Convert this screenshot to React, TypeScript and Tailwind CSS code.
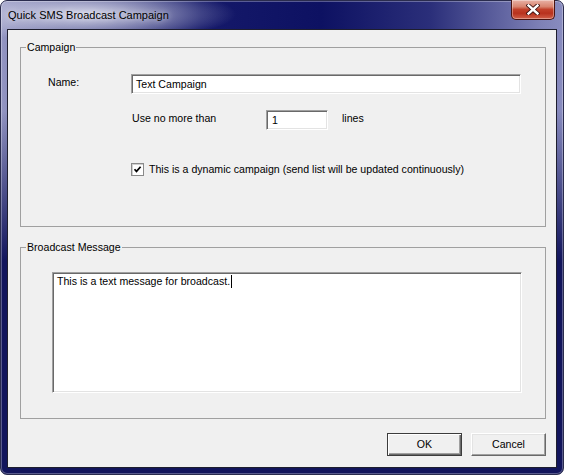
import React from 'react';

const sunken =
  'border border-t-[#a0a0a0] border-l-[#a0a0a0] border-r-white border-b-white bg-white shadow-[inset_1px_1px_0_#696969,inset_-1px_-1px_0_#e3e3e3]';

const CloseButton: React.FC = () => (
  <div className="w-[44px] h-[20px] -mt-[1px] rounded-b-[5px] border border-[#4a1410] border-t-0 flex items-center justify-center bg-[linear-gradient(180deg,#e9b2a6_0%,#d8846f_35%,#c2402a_50%,#b8321e_70%,#d2604a_100%)] shadow-[inset_0_0_0_1px_rgba(255,255,255,0.35)]">
    <svg width="14" height="11" viewBox="0 0 14 11">
      <path d="M2.5 1.5 L11.5 9.5 M11.5 1.5 L2.5 9.5" stroke="#3a1010" strokeWidth="4.2" strokeLinecap="square" />
      <path d="M2.5 1.5 L11.5 9.5 M11.5 1.5 L2.5 9.5" stroke="#ffffff" strokeWidth="2.4" strokeLinecap="square" />
    </svg>
  </div>
);

const Check: React.FC = () => (
  <div className="w-[13px] h-[13px] border border-[#8a8a8a] bg-white shadow-[inset_1px_1px_0_#d0d0d0] flex items-center justify-center">
    <svg width="9" height="9" viewBox="0 0 9 9">
      <path d="M1.5 4.2 L3.5 6.4 L7.6 1.8" stroke="#000" strokeWidth="1.7" fill="none" />
    </svg>
  </div>
);

const Button: React.FC<{ label: string; isDefault?: boolean }> = ({ label, isDefault }) =>
  isDefault ? (
    <button className="w-[75px] h-[23px] border border-[#3c3c3c] bg-[#f0f0f0] shadow-[inset_1px_1px_0_#fff,inset_-1px_-1px_0_#696969,inset_-2px_-2px_0_#a0a0a0] flex items-center justify-center">
      {label}
    </button>
  ) : (
    <button className="w-[75px] h-[23px] border border-t-white border-l-white border-r-[#696969] border-b-[#696969] bg-[#f0f0f0] shadow-[inset_-1px_-1px_0_#a0a0a0,inset_1px_1px_0_#e3e3e3] flex items-center justify-center">
      {label}
    </button>
  );

const App: React.FC = () => {
  return (
    <div className="w-[564px] h-[475px] font-['Liberation_Sans',Arial,sans-serif] text-black">
      <div className="w-[564px] h-[475px] rounded-[7px] border border-[#2a2c4e] flex flex-col shadow-[inset_0_0_0_1px_rgba(255,255,255,0.3)] bg-[radial-gradient(ellipse_150px_28px_at_85px_13px,rgba(226,227,241,0.9),rgba(226,227,241,0)_100%),linear-gradient(180deg,rgba(18,21,92,0)_0px,rgba(18,21,92,0)_110px,#12155c_260px),linear-gradient(90deg,#9496c2_0px,#5a5d98_60px,#15196a_200px,#0d1162_320px,#2b2f7a_430px,#7e81b6_540px,#8a8dc0_564px)]">
        {/* title bar */}
        <div className="h-[28px] flex items-start justify-between pl-[7px] pr-[8px]">
          <span className="mt-[7px] text-[11px] leading-[14px] [text-shadow:0_0_6px_rgba(255,255,255,0.8)]">
            Quick SMS Broadcast Campaign
          </span>
          <CloseButton />
        </div>

        {/* client area */}
        <div className="mx-[6px] h-[439px] border border-[#1e1e2e] bg-[#f0f0f0] text-[10.6px] leading-[13px] flex flex-col">
          <fieldset className="mt-[11px] ml-[12px] mr-[10px] h-[186px] border border-[#a0a0a0]">
            <legend className="ml-[5px] px-[1px] leading-[13px]">Campaign</legend>
            <div className="pt-[20px]">
              <div className="flex items-start pl-[27px]">
                <span className="w-[83px] pt-[2px]">Name:</span>
                <div className={`${sunken} w-[390px] h-[20px] flex items-center pl-[4px]`}>Text Campaign</div>
              </div>
              <div className="mt-[16px] flex items-start pl-[111px]">
                <span className="w-[134px] pt-[2px]">Use no more than</span>
                <div className={`${sunken} w-[62px] h-[20px] flex items-center pl-[5px]`}>1</div>
                <span className="ml-[14px] pt-[2px]">lines</span>
              </div>
              <div className="mt-[33px] flex items-center pl-[110px]">
                <Check />
                <span className="ml-[5px]">This is a dynamic campaign (send list will be updated continuously)</span>
              </div>
            </div>
          </fieldset>

          <fieldset className="mt-[14px] ml-[12px] mr-[10px] h-[178px] border border-[#a0a0a0]">
            <legend className="ml-[5px] px-[1px] leading-[13px]">Broadcast Message</legend>
            <div className={`${sunken} mt-[18px] ml-[31px] w-[470px] h-[121px] pl-[4px] pt-[2px]`}>
              This is a text message for broadcast.
              <span className="inline-block w-px h-[13px] bg-black align-top ml-[1px]" />
            </div>
          </fieldset>

          <div className="mt-[14px] mr-[10px] flex justify-end gap-[9px]">
            <Button label="OK" isDefault />
            <Button label="Cancel" />
          </div>
        </div>
      </div>
    </div>
  );
};

export default App;
